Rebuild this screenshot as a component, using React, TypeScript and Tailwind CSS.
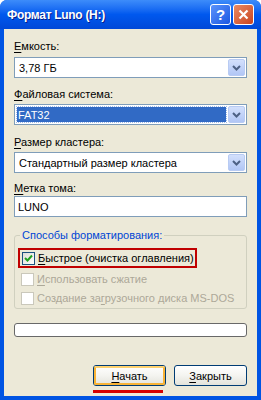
import React from "react";

const font = { fontFamily: '"Liberation Sans", Arial, sans-serif' };

function Acc({ ch, rest }: { ch: string; rest: string }) {
  return (
    <>
      <span className="underline underline-offset-2">{ch}</span>
      {rest}
    </>
  );
}

function DropBtn() {
  return (
    <div className="flex h-[17px] w-[17px] items-center justify-center rounded-[2px] border border-[#b8cbf3] bg-gradient-to-b from-[#d3e0fc] to-[#b1c6f5]">
      <svg width="9" height="6" viewBox="0 0 9 6">
        <path d="M1 1 L4.5 4.5 L8 1" fill="none" stroke="#4d6185" strokeWidth="2" />
      </svg>
    </div>
  );
}

function Combo({ value, selected }: { value: string; selected?: boolean }) {
  return (
    <div className="flex h-[21px] w-[233px] items-center border border-[#7f9db9] bg-white pl-[2px] pr-[1px]">
      <div
        className={
          selected
            ? "mr-[2px] flex h-[15px] flex-1 items-center bg-[#316ac5] pl-[1px] text-white outline-1 outline-dotted outline-[#9fb9e6]"
            : "flex h-[15px] flex-1 items-center pl-[2px] text-black"
        }
      >
        {value}
      </div>
      <DropBtn />
    </div>
  );
}

function Check({ checked, disabled, children }: { checked?: boolean; disabled?: boolean; children: React.ReactNode }) {
  return (
    <div className="flex h-[14px] items-center gap-[3px] whitespace-nowrap">
      <div
        className={
          disabled
            ? "flex h-[13px] w-[13px] items-center justify-center border border-[#cac8bb] bg-white"
            : "flex h-[13px] w-[13px] items-center justify-center border border-[#1c5180] bg-gradient-to-br from-[#dcdcd7] to-white"
        }
      >
        {checked && (
          <svg width="9" height="9" viewBox="0 0 9 9">
            <path d="M1 4 L3.5 6.5 L8 1.5" fill="none" stroke="#21a121" strokeWidth="2" />
          </svg>
        )}
      </div>
      <span className={disabled ? "text-[#aca899]" : "text-black"}>{children}</span>
    </div>
  );
}

function XpButton({ children, isDefault }: { children: React.ReactNode; isDefault?: boolean }) {
  return (
    <div className="h-[21px] w-[73px] rounded-[3px] border border-[#003c74] bg-gradient-to-b from-white via-[#f4f4f0] to-[#e3e3db]">
      <div
        className={
          isDefault
            ? "flex h-full w-full items-center justify-center rounded-[2px] border-2 border-[#f8b336] border-t-[#fed26f]"
            : "flex h-full w-full items-center justify-center"
        }
      >
        {children}
      </div>
    </div>
  );
}

export default function App() {
  return (
    <div className="h-[400px] w-[261px] text-[11px] leading-[14px]" style={font}>
      <div className="flex h-[400px] w-[261px] flex-col overflow-hidden rounded-t-[7px] bg-[#0054e3]">
        {/* title bar */}
        <div className="flex h-[29px] items-center bg-gradient-to-b from-[#3d8cfa] via-[#0058ee] to-[#0048d8] pl-[7px] pr-[7px]">
          <span className="flex-1 text-[12px] font-bold tracking-[-0.3px] text-white [text-shadow:1px_1px_0_#0a1e8a]">Формат Luno (H:)</span>
          <div className="flex gap-[2px]">
            <div className="flex h-[21px] w-[21px] items-center justify-center rounded-[3px] border border-white bg-gradient-to-br from-[#5b93fb] to-[#1b56e2] text-[15px] font-bold text-white">
              ?
            </div>
            <div className="flex h-[21px] w-[21px] items-center justify-center rounded-[3px] border border-white bg-gradient-to-br from-[#e98a63] to-[#c9421d]">
              <svg width="11" height="11" viewBox="0 0 11 11">
                <path d="M1.5 1.5 L9.5 9.5 M9.5 1.5 L1.5 9.5" stroke="white" strokeWidth="2.2" />
              </svg>
            </div>
          </div>
        </div>

        {/* client */}
        <div className="mx-[4px] mb-[4px] flex flex-1 flex-col bg-[#ece9d8] pl-[10px]">
          <div className="mt-[10px]">
            <Acc ch="Е" rest="мкость:" />
          </div>
          <div className="mt-[4px]">
            <Combo value="3,78 ГБ" />
          </div>

          <div className="mt-[9px]">
            <Acc ch="Ф" rest="айловая система:" />
          </div>
          <div className="mt-[3px]">
            <Combo value="FAT32" selected />
          </div>

          <div className="mt-[10px]">
            <Acc ch="Р" rest="азмер кластера:" />
          </div>
          <div className="mt-[3px]">
            <Combo value="Стандартный размер кластера" />
          </div>

          <div className="mt-[8px]">
            <Acc ch="М" rest="етка тома:" />
          </div>
          <div className="mt-[1px] flex h-[21px] w-[233px] items-center border border-[#7f9db9] bg-white pl-[3px]">LUNO</div>

          {/* group */}
          <div className="relative mt-[18px] h-[74px] w-[233px] rounded-[3px] border border-[#d0d0bf]">
            <span className="absolute -top-[8px] left-[5px] bg-[#ece9d8] px-[2px] text-[#0046d5]">Способы форматирования:</span>
            <div className="mt-[12px] flex flex-col gap-[4px] pl-[6px]">
              <div className="-ml-[3px] w-fit border-2 border-[#c00000] py-[1px] pl-[2px] pr-[1px]">
                <Check checked>
                  <Acc ch="Б" rest="ыстрое (очистка оглавления)" />
                </Check>
              </div>
              <Check disabled>
                <Acc ch="И" rest="спользовать сжатие" />
              </Check>
              <div className="mt-[1px]">
                <Check disabled>
                  Создание за<span className="underline underline-offset-2">г</span>рузочного диска MS-DOS
                </Check>
              </div>
            </div>
          </div>

          <div className="mt-[14px] h-[14px] w-[233px] rounded-[3px] border border-[#686868] bg-white" />

          <div className="mt-[28px] flex w-[233px] justify-end gap-[8px]">
            <div className="flex flex-col">
              <XpButton isDefault>
                <Acc ch="Н" rest="ачать" />
              </XpButton>
              <div className="mt-[4px] h-[3px] w-[70px] bg-[#d40000]" />
            </div>
            <XpButton>
              <Acc ch="З" rest="акрыть" />
            </XpButton>
          </div>
        </div>
      </div>
    </div>
  );
}
